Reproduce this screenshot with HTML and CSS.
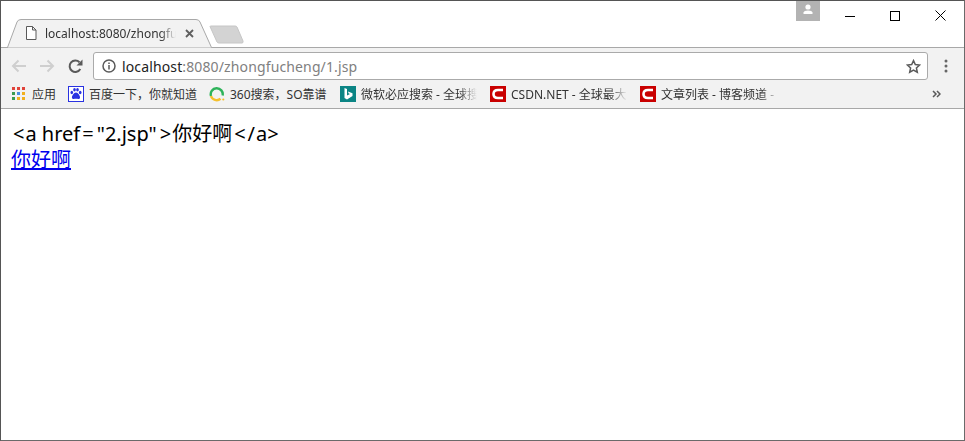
FILE: index.html
```html
<!DOCTYPE html>
<html lang="zh">
<head>
<meta charset="utf-8">
<title>localhost:8080/zhongfucheng/1.jsp</title>
<link rel="stylesheet" href="styles.css">
</head>
<body>
<div class="window">
  <header class="titlebar">
    <div class="tab">
      <svg class="tab-shape" width="212" height="30" viewBox="0 0 212 30"><path d="M0 29.500H6.500L16 4Q17 1.500 20 1.500H195Q198 1.500 199 4L210.500 29.500" fill="#f2f2f2" stroke="#a8a8a8"/></svg>
      <svg class="tab-doc" width="12" height="14" viewBox="0 0 12 14"><path d="M1.500.5H7.500L11 4V13.500H1.500ZM7.500.5V4H11" fill="#fff" stroke="#5a5a5a"/></svg>
      <span class="tab-title">localhost:8080/zhongfucheng/1.jsp</span>
      <svg class="tab-close" width="9" height="9" viewBox="0 0 9 9"><path d="M1 1L8 8M8 1L1 8" stroke="#5f5f5f" stroke-width="1.800"/></svg>
    </div>
    <svg class="new-tab" width="36" height="20" viewBox="0 0 36 20"><path d="M1 1.500Q1 1 2 1H26Q27.500 1 28 2L34 16Q34.500 18 33 18H10Q8.500 18 8 17Z" fill="#d3d3d3" stroke="#c6c6c6"/></svg>
    <div class="caption">
      <div class="avatar"><svg width="12" height="10" viewBox="0 0 12 10"><circle cx="6" cy="3" r="2.600" fill="#fff"/><path d="M1.500 10V8.500Q2 6.500 6 6.500T10.500 8.500V10Z" fill="#fff"/></svg></div>
      <svg class="cap-btn cap-min" width="10" height="10" viewBox="0 0 10 10"><path d="M0 5.500H10" stroke="#000"/></svg>
      <svg class="cap-btn cap-max" width="10" height="10" viewBox="0 0 10 10"><rect x=".5" y=".5" width="9" height="9" fill="none" stroke="#000"/></svg>
      <svg class="cap-btn cap-close" width="11" height="11" viewBox="0 0 11 11"><path d="M.5 .5L10.500 10.500M10.500 .5L.5 10.500" stroke="#000"/></svg>
    </div>
  </header>
  <nav class="toolbar">
    <svg class="tool back" width="16" height="14" viewBox="0 0 16 14"><path d="M15 7H2M7.500 1.500L2 7L7.500 12.500" fill="none" stroke="#cfcfcf" stroke-width="2"/></svg>
    <svg class="tool forward" width="16" height="14" viewBox="0 0 16 14"><path d="M1 7H14M8.500 1.500L14 7L8.500 12.500" fill="none" stroke="#cfcfcf" stroke-width="2"/></svg>
    <svg class="tool reload" width="15" height="15" viewBox="0 0 15 15"><path d="M12.300 10A5.700 5.700 0 1 1 11.500 3.300" fill="none" stroke="#5a5a5a" stroke-width="2"/><path d="M14.500 .5V6.500H8.500Z" fill="#5a5a5a"/></svg>
    <div class="omnibox">
      <svg class="info" width="14" height="14" viewBox="0 0 14 14"><circle cx="7" cy="7" r="6" fill="none" stroke="#5a5a5a" stroke-width="1.500"/><path d="M7 6V10.500M7 3.500V5" stroke="#5a5a5a" stroke-width="1.500"/></svg>
      <span class="url"><span class="host">localhost</span>:8080/zhongfucheng/1.jsp</span>
      <svg class="star" width="15" height="15" viewBox="0 0 15 15"><path d="M7.500 1.600L9.300 5.500L13.600 6L10.400 8.900L11.300 13.200L7.500 11L3.700 13.200L4.600 8.900L1.400 6L5.700 5.500Z" fill="none" stroke="#5a5a5a" stroke-width="1.500"/></svg>
    </div>
    <svg class="menu" width="4" height="14" viewBox="0 0 4 14"><circle cx="2" cy="2" r="1.500" fill="#666"/><circle cx="2" cy="7" r="1.500" fill="#666"/><circle cx="2" cy="12" r="1.500" fill="#666"/></svg>
  </nav>
  <div class="bookmarks">
    <div class="bm bm-apps">
      <svg width="13" height="14" viewBox="0 0 13 14"><g><rect width="3" height="3" x="0" y="0" fill="#e0433a"/><rect width="3" height="3" x="5" y="0" fill="#e0433a"/><rect width="3" height="3" x="10" y="0" fill="#e0433a"/><rect width="3" height="3" x="0" y="5" fill="#3b9b50"/><rect width="3" height="3" x="5" y="5" fill="#4a8ee0"/><rect width="3" height="3" x="10" y="5" fill="#f2b01e"/><rect width="3" height="3" x="0" y="10" fill="#3b9b50"/><rect width="3" height="3" x="5" y="10" fill="#f2b01e"/><rect width="3" height="3" x="10" y="10" fill="#f2b01e"/></g></svg>
      <span class="bm-text">应用</span>
    </div>
    <div class="bm bm-baidu">
      <svg width="16" height="16" viewBox="0 0 16 16"><rect x=".5" y=".5" width="15" height="15" fill="#fff" stroke="#2932e1"/><g fill="#2932e1"><ellipse cx="3.800" cy="6.500" rx="1.300" ry="1.800"/><ellipse cx="6.500" cy="3.800" rx="1.300" ry="1.800"/><ellipse cx="9.500" cy="3.800" rx="1.300" ry="1.800"/><ellipse cx="12.200" cy="6.500" rx="1.300" ry="1.800"/><path d="M8 6.500C10 6.500 12.500 10 12 12C11.500 13.500 9.500 12.800 8 12.800S4.500 13.500 4 12C3.500 10 6 6.500 8 6.500Z"/></g></svg>
      <span class="bm-text">百度一下，你就知道</span>
    </div>
    <div class="bm bm-360">
      <svg width="16" height="16" viewBox="0 0 16 16"><path d="M2 10A6 6 0 1 1 13.600 9.500" fill="none" stroke="#2eb35a" stroke-width="2.400"/><path d="M2 10A6 6 0 0 0 11.500 12.800" fill="none" stroke="#f5c02c" stroke-width="2.400"/><circle cx="14.300" cy="13.500" r="1.100" fill="#f5c02c"/></svg>
      <span class="bm-text">360搜索，SO靠谱</span>
    </div>
    <div class="bm bm-bing">
      <svg width="16" height="16" viewBox="0 0 16 16"><rect width="16" height="16" fill="#0b8484"/><path d="M4.500 2L7 3V9.500L10 8L8.500 7.200L8 5.500L12.500 7.300V10L7 13.500L4.500 12Z" fill="#fff"/></svg>
      <span class="bm-text bm-fade">微软必应搜索 - 全球搜</span>
    </div>
    <div class="bm bm-csdn">
      <svg width="16" height="16" viewBox="0 0 16 16"><rect width="16" height="16" fill="#c90000"/><path d="M13 4H8Q3.500 4 3.500 8T8 12H13" fill="none" stroke="#fff" stroke-width="2.600"/></svg>
      <span class="bm-text bm-fade">CSDN.NET - 全球最大</span>
    </div>
    <div class="bm bm-blog">
      <svg width="16" height="16" viewBox="0 0 16 16"><rect width="16" height="16" fill="#c90000"/><path d="M13 4H8Q3.500 4 3.500 8T8 12H13" fill="none" stroke="#fff" stroke-width="2.600"/></svg>
      <span class="bm-text bm-fade">文章列表 - 博客频道 - </span>
    </div>
    <svg class="more" width="9" height="8" viewBox="0 0 9 8"><path d="M1 1L4 4L1 7M5 1L8 4L5 7" fill="none" stroke="#5a5a5a" stroke-width="1.500"/></svg>
  </div>
  <main class="content">
    <div class="source"><span class="ml2 mr1">&lt;</span>a href<span class="ml2">=</span><span class="ml3">"</span>2.jsp"<span class="ml3">&gt;</span><span class="ml1">你好啊</span><span class="ml2">&lt;</span><span class="ml2">/</span><span class="ml1">a</span>&gt;</div>
    <a class="link" href="#">你好啊</a>
  </main>
</div>
</body>
</html>
```
FILE: styles.css
```css
* { box-sizing: border-box; }
html, body { margin: 0; padding: 0; height: 100%; background: #fff; overflow: hidden; }
body { font-family: "Noto Sans", "Noto Sans CJK SC", sans-serif; }
.window {
  width: 965px; height: 441px; border: 1px solid #555;
  border-right-color: #6a6a6a; border-bottom-color: #6a6a6a;
  display: flex; flex-direction: column; background: #fff;
}
.titlebar { height: 47px; flex: none; display: flex; align-items: flex-end; border-bottom: 1px solid #a8a8a8; }
.tab { width: 210px; height: 30px; margin-bottom: -1px; position: relative; flex: none; display: flex; align-items: center; padding-left: 24px; }
.tab-shape { position: absolute; left: 0; top: 0; }
.tab-doc { position: relative; flex: none; }
.tab-title {
  position: relative; width: 131px; margin-left: 8px; white-space: nowrap; overflow: hidden;
  font-size: 12px; color: #333;
  -webkit-mask-image: linear-gradient(90deg, #000 88%, transparent);
  mask-image: linear-gradient(90deg, #000 88%, transparent);
}
.tab-close { position: relative; margin-left: 9px; flex: none; }
.new-tab { flex: none; margin: 0 0 2px -2px; }
.caption { margin-left: auto; align-self: flex-start; display: flex; align-items: center; height: 29px; }
.avatar { width: 24px; height: 20px; background: #b3b3b3; display: flex; justify-content: center; align-items: center; align-self: flex-start; padding-bottom: 4px; margin-right: 25px; }
.cap-btn { flex: none; }
.cap-min { margin-right: 35px; }
.cap-max { margin-right: 35px; }
.cap-close { margin-right: 18px; }
.toolbar { height: 32px; flex: none; background: #f2f2f2; display: flex; align-items: center; padding: 4px 0 0 10px; }
.tool { flex: none; }
.forward { margin-left: 12px; }
.reload { margin-left: 13px; }
.omnibox {
  margin-left: 10px; width: 835px; height: 28px; background: #fff; border: 1px solid #aaa; border-radius: 3px;
  display: flex; align-items: center; padding: 0 6px 0 8px; flex: none;
}
.info { flex: none; }
.url { margin-left: 6px; font-size: 14px; letter-spacing: .13px; color: #808080; flex: 1; white-space: nowrap; }
.host { color: #222; }
.star { flex: none; }
.menu { flex: none; margin-left: 16px; }
.bookmarks { height: 29px; flex: none; background: #f2f2f2; border-bottom: 1px solid #a8a8a8; display: flex; align-items: center; padding-left: 11px; }
.bm { display: flex; align-items: center; flex: none; }
.bm-text { margin-left: 5px; font-size: 12px; color: #333; white-space: nowrap; overflow: hidden; }
.bm-fade {
  -webkit-mask-image: linear-gradient(90deg, #000 85%, transparent);
  mask-image: linear-gradient(90deg, #000 85%, transparent);
}
.bm-apps { width: 56px; }
.bm-apps .bm-text { margin-left: 7px; }
.bm-baidu { width: 141px; }
.bm-360 { width: 131px; }
.bm-bing { width: 150px; }
.bm-bing .bm-text { width: 116px; }
.bm-csdn { width: 150px; }
.bm-csdn .bm-text { width: 116px; }
.bm-blog { width: 140px; }
.bm-blog .bm-text { width: 118px; }
.more { margin-left: auto; margin-right: 23px; }
.content { flex: 1; padding: 12px 10px; font-size: 20px; color: #000; }
.source { white-space: nowrap; line-height: 25px; }
.ml1 { margin-left: 1px; }
.ml2 { margin-left: 2px; }
.ml3 { margin-left: 3px; }
.mr1 { margin-right: 1px; }
.link { color: #00e; text-decoration: underline; line-height: 26px; display: inline-block; }
```
